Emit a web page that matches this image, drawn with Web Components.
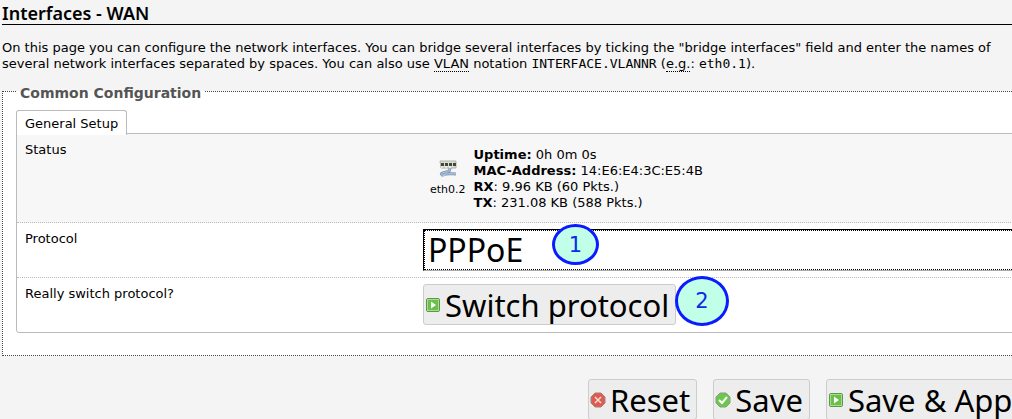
<!DOCTYPE html>
<html lang="en">
<head>
<meta charset="utf-8">
<title>Interfaces - WAN</title>
<style>
html,body{margin:0;background:#f4f4f4;overflow-x:hidden}
body{min-height:100vh;overflow:hidden;font:13px/16px "DejaVu Sans",sans-serif;color:#000}
</style>
</head>
<body>
<wan-page></wan-page>

<template id="wan-page">
<style>
:host{display:block;width:calc(100% + 58px);padding-left:2px;box-sizing:border-box}
h2{margin:0;height:24px;border-bottom:1px solid #000;font:600 18px/26px "Noto Sans",sans-serif}
p{margin:15px 56px 9px 0}
abbr{text-decoration:none;border-bottom:1px dotted #000}
code{font:13px/16px "DejaVu Sans Mono",monospace}
select{appearance:none;display:block;box-sizing:border-box;width:100%;height:42px;margin:0;padding:0 4px;border:1px solid #000;border-bottom-color:#aaa;border-radius:0;background:#fff;color:#000;font:32px/40px "Noto Sans",sans-serif;outline:1px dotted #000;outline-offset:-2px}
.field{position:relative}
.one{position:absolute;left:129px;top:-5px}
.two{position:absolute;left:252px;top:-8px}
.actions{display:flex;gap:16px;margin:23px 0 0 586px}
</style>
<h2>Interfaces - WAN</h2>
<p>On this page you can configure the network interfaces. You can bridge several interfaces by ticking the "bridge interfaces" field and enter the names of several network interfaces separated by spaces. You can also use <abbr title="Virtual Local Area Network">VLAN</abbr> notation <code>INTERFACE.VLANNR</code> (<abbr title="exempli gratia">e.g.</abbr>: <code>eth0.1</code>).</p>
<config-section>
  <span slot="legend">Common Configuration</span>
  <span slot="tab">General Setup</span>
  <config-row shaded>
    <span slot="label">Status</span>
    <interface-status></interface-status>
  </config-row>
  <config-row>
    <label slot="label" for="proto">Protocol</label>
    <div class="field">
      <select id="proto"><option>PPPoE</option></select>
      <step-badge class="one">1</step-badge>
    </div>
  </config-row>
  <config-row>
    <span slot="label">Really switch protocol?</span>
    <div class="field">
      <action-button icon="apply">Switch protocol</action-button>
      <step-badge class="two" large>2</step-badge>
    </div>
  </config-row>
</config-section>
<div class="actions">
  <action-button icon="reset">Reset</action-button>
  <action-button icon="save">Save</action-button>
  <action-button icon="apply">Save &amp; Apply</action-button>
</div>
</template>

<template id="config-section">
<style>
:host{display:block}
fieldset{margin:0;min-width:0;border:1px dotted #444;background:#fff;padding:9px 13px 22px}
legend{padding:4px 4px 0;font:bold 14px/16px "DejaVu Sans",sans-serif;color:#555}
.tab{display:block;width:max-content;box-sizing:border-box;height:25px;margin-bottom:-2px;padding:0 8px;border:1px solid #bbb;border-bottom:0;border-radius:3px 3px 0 0;background:#fff;line-height:26px;color:#000;text-decoration:none;position:relative}
.panel{border:1px solid #bbb;border-radius:0 0 3px 3px}
</style>
<fieldset>
  <legend><slot name="legend"></slot></legend>
  <a class="tab" href="#general"><slot name="tab"></slot></a>
  <div class="panel" id="general"><slot></slot></div>
</fieldset>
</template>

<template id="config-row">
<style>
:host{display:grid;grid-template-columns:398px minmax(0,1fr);padding:6px 8px;border-bottom:1px dotted #bbb}
:host(:last-child){border-bottom:0}
:host([shaded]){background:#f7f7f7}
.label{padding-top:2px}
</style>
<div class="label"><slot name="label"></slot></div>
<div><slot></slot></div>
</template>

<template id="interface-status">
<style>
:host{display:flex;align-items:center;gap:8px;padding:7px 0 5px 7px}
.port{display:flex;flex-direction:column;align-items:center;gap:4px;font-size:11px}
svg{display:block}
</style>
<div class="port">
  <svg width="18" height="18" viewBox="0 0 18 18" aria-hidden="true">
    <path d="M1 1h16v7H2z" fill="#dcdcd4" stroke="#b0b0ac"/>
    <path d="M2 3h3v3H2zM6 3h3v3H6zM10 3h3v3h-3zM14 3h3v3h-3z" fill="#394b35"/>
    <path d="M2 7h2M6 7h2M10 7h2" stroke="#fff"/>
    <path d="M11 8c0 3-2 4-4 4-5 1-6 2-3 3 3-2 8-1 13-1" fill="none" stroke="#8098b8" stroke-width="3"/>
    <path d="M11 8c0 3-2 4-4 4-5 1-6 2-3 3 3-2 8-1 13-1M2 17l4-2" fill="none" stroke="#b8cfe8"/>
  </svg>
  <span>eth0.2</span>
</div>
<div><b>Uptime:</b> 0h 0m 0s<br><b>MAC-Address:</b> 14:E6:E4:3C:E5:4B<br><b>RX</b>: 9.96 KB (60 Pkts.)<br><b>TX</b>: 231.08 KB (588 Pkts.)</div>
</template>

<template id="action-button">
<style>
:host{display:block;width:max-content;height:42px}
button{display:flex;align-items:center;gap:4px;height:41px;box-sizing:border-box;margin:0;padding:0 6px 0 1px;border:1px solid #ccc;border-radius:3px;background:#ededed;color:#000;font:31px/40px "Noto Sans",sans-serif;white-space:nowrap}
svg{display:none;flex:none}
:host([icon=apply]) .apply,:host([icon=save]) .save,:host([icon=reset]) .reset{display:block}
</style>
<button type="button">
  <svg class="apply" width="16" height="16" viewBox="0 0 16 16" aria-hidden="true"><rect x="1.500" y="1.500" width="13" height="13" rx="1.500" fill="#6cc04a" stroke="#5c9450"/><rect x="2.500" y="2.500" width="11" height="11" fill="none" stroke="#a5df8c"/><path d="M6 4.500v7l5-3.500z" fill="#fff"/></svg>
  <svg class="save" width="16" height="16" viewBox="0 0 16 16" aria-hidden="true"><path d="M5 1h6l4 4v6l-4 4H5l-4-4V5z" fill="#6cc84d" stroke="#8b9b84"/><path d="M4 8l3 3 5-6" fill="none" stroke="#fff" stroke-width="2"/></svg>
  <svg class="reset" width="16" height="16" viewBox="0 0 16 16" aria-hidden="true"><path d="M5 1h6l4 4v6l-4 4H5l-4-4V5z" fill="#de5c50" stroke="#a58078"/><path d="M5 5l6 6M11 5l-6 6" fill="none" stroke="#f8dcd8" stroke-width="1.500"/></svg>
  <span><slot></slot></span>
</button>
</template>

<template id="step-badge">
<style>
:host{display:flex;align-items:center;justify-content:center;box-sizing:border-box;width:47px;height:41px;border:3px solid #0a1cff;border-radius:50%;background:#c2ffe9;color:#0a2be8;font:21px/24px "DejaVu Sans",sans-serif}
:host([large]){width:54px;height:50px}
</style>
<slot></slot>
</template>

<script>
for (const name of ['step-badge','action-button','interface-status','config-row','config-section','wan-page']) {
  customElements.define(name, class extends HTMLElement {
    constructor() {
      super();
      this.attachShadow({mode:'open'}).append(document.getElementById(name).content.cloneNode(true));
    }
  });
}
</script>
</body>
</html>
